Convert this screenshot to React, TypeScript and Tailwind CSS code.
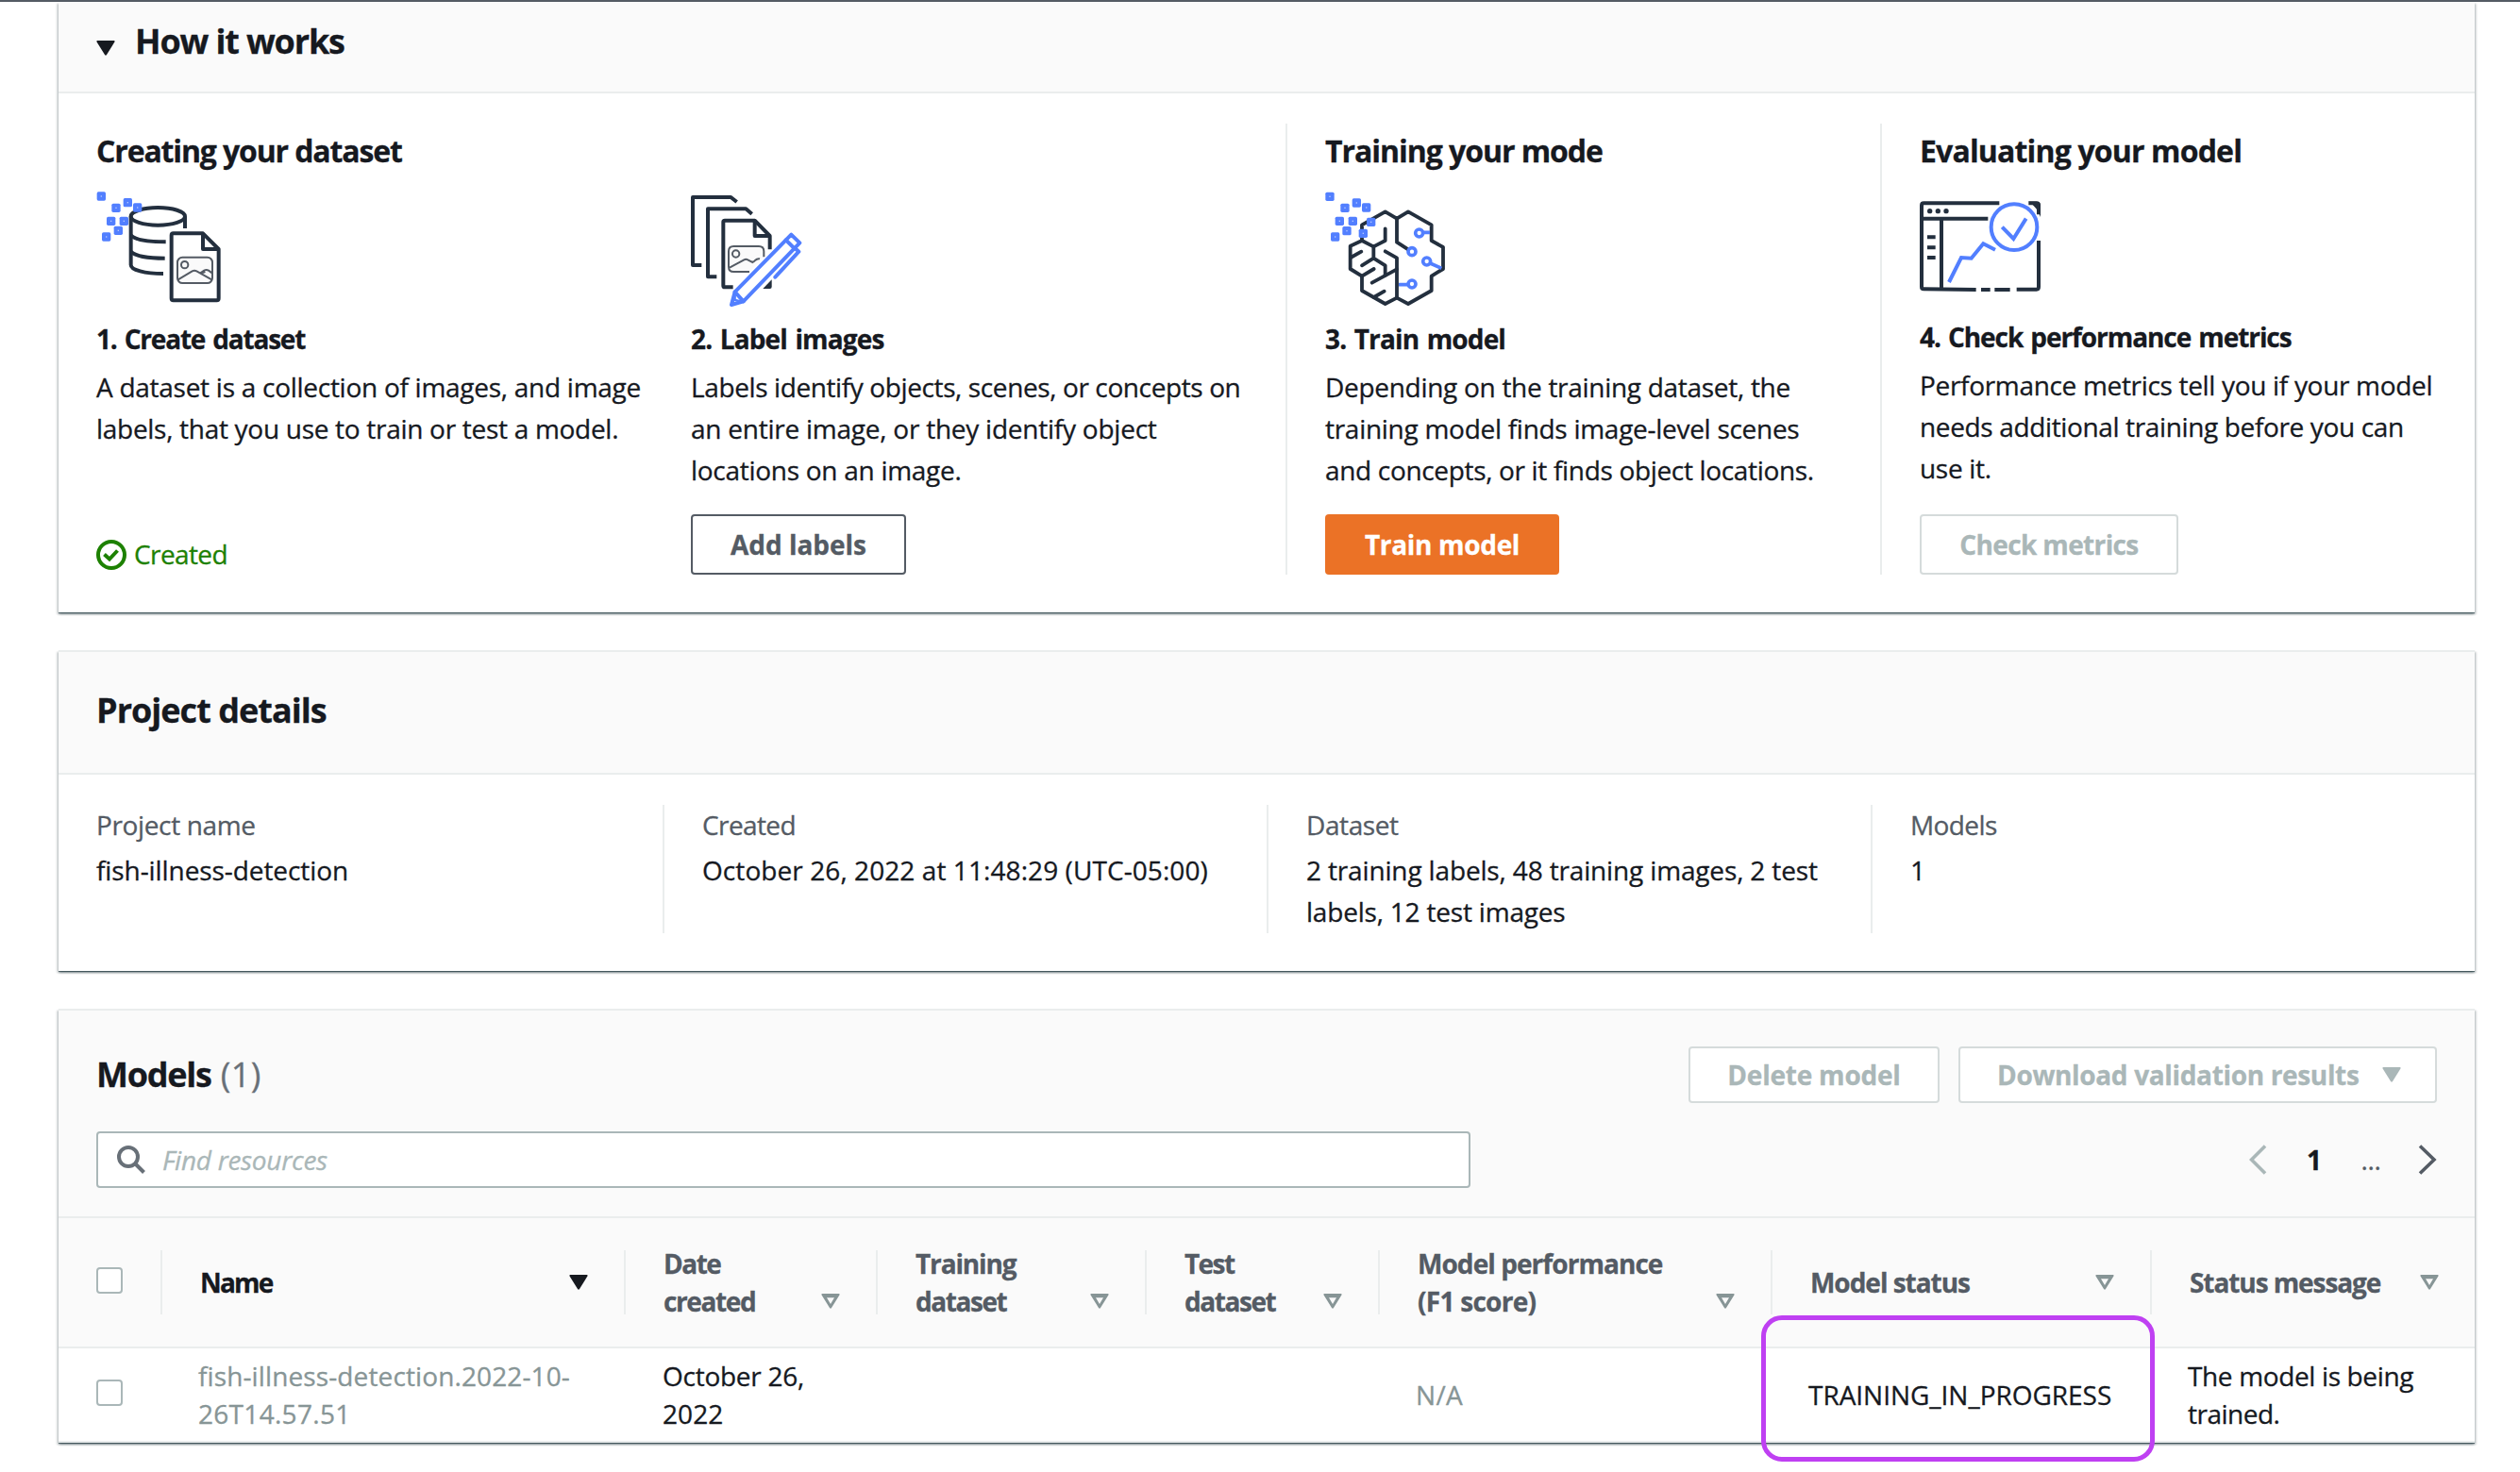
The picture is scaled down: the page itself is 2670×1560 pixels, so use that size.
import type { ReactNode } from "react";

const NAVY = "#232f3e";
const BLUE = "#527fff";

/* Small blue squares scattered at the corner of an illustration */
function Pixels({ points }: { points: [number, number][] }) {
  return (
    <g fill={BLUE}>
      {points.map(([x, y]) => (
        <g key={`${x}-${y}`}>
          <rect x={x - 14} y={y - 14} width="28" height="28" rx="5" />
          <rect x={x - 2} y={y - 2} width="4" height="4" fill="#b4c7ff" />
        </g>
      ))}
    </g>
  );
}

function DatasetIcon() {
  return (
    <svg className="block h-[130px] w-[148px]" viewBox="36 30 444 390" fill="none">
      <g stroke={NAVY} strokeWidth="12">
        <ellipse cx="232" cy="118" rx="86" ry="28" />
        <path d="M146 118V272C146 288 190 300 249 300" />
        <path d="M318 118V156" />
        <path d="M146 178C160 192 200 199 257 199" />
        <path d="M146 230C160 243 200 251 254 251" />
        <path d="M375 172H281Q275 172 275 178V379Q275 385 281 385H419Q425 385 425 379V222Z" strokeLinejoin="round" />
        <path d="M375 172V222H425" strokeLinejoin="round" />
      </g>
      <g stroke="#545b64" strokeWidth="6">
        <rect x="294" y="248" width="111" height="82" rx="16" fill="#fafafa" />
        <circle cx="317" cy="272" r="11" />
        <path d="M296 319L341 292Q348 288 355 292L403 319M367 298L379 290Q386 286 393 290L404 298M369 297Q376 298 382 294" />
      </g>
      <Pixels points={[[52, 54], [136, 74], [99, 91], [167, 90], [83, 133], [124, 133], [106, 163], [68, 183]]} />
    </svg>
  );
}

function LabelIcon() {
  return (
    <svg className="block h-[130px] w-[128px]" viewBox="36 15 384 390" fill="none">
      <g stroke={NAVY} strokeWidth="12" strokeLinejoin="round">
        <path d="M70 258H42V42H163L182 57" />
        <path d="M118 295H90V79H211L230 95" />
        <path d="M170 328H144Q139 328 139 323V121Q139 116 144 116H239L287 165V208" />
        <path d="M239 116V165H287" />
      </g>
      <path d="M265 333L293 304V327Q293 333 287 333Z" fill={NAVY} />
      <g stroke="#545b64" strokeWidth="6">
        <path
          d="M222 279H172Q156 279 156 263V214Q156 198 172 198H252Q268 198 268 214V232"
          fill="#fafafa"
        />
        <circle cx="179" cy="222" r="11" />
        <path d="M159 266L205 241Q211 238 217 241L234 250M229 246Q234 251 240 243Q247 236 255 238" />
      </g>
      <g stroke={BLUE} strokeWidth="12" strokeLinejoin="round" strokeLinecap="round">
        <path d="M355 161L176 343L165 384L203 373L382 187Z" fill="white" />
        <path d="M338 178L366 206M176 343L203 373M366 203L379 215L304 296" />
        <path d="M176 343V369L196 373" strokeWidth="7" />
      </g>
    </svg>
  );
}

function BrainIcon() {
  return (
    <svg className="block h-[130px] w-[141px]" viewBox="27 15 423 390" fill="none">
      <g stroke={NAVY} strokeWidth="11.5" strokeLinejoin="round">
        <path d="M144 180V130L218 88L255 110L291 88L365 130V180L402 201V270L365 293V339L291 381L255 362L218 381L144 339V293L107 270V197L144 180" />
        <path d="M255 110V185L292 209" />
        <g strokeLinecap="round">
          <path d="M144 180L181 199L218 180V142" />
          <path d="M181 199V236L144 259M181 236L218 259V290" />
          <path d="M108 234L142 215" />
          <path d="M144 293L182 270" />
          <path d="M218 214L255 235V362" />
          <path d="M255 271L176 314" />
          <path d="M182 360L215 341" />
        </g>
      </g>
      <g stroke={BLUE} strokeWidth="11">
        <circle cx="326" cy="156" r="12" />
        <circle cx="303" cy="215" r="12" />
        <circle cx="350" cy="246" r="12" />
        <circle cx="303" cy="318" r="12" />
        <path d="M338 154H360M361 252L397 268M291 320H261" />
      </g>
      <Pixels
        points={[[42, 40], [127, 60], [90, 76], [158, 75], [73, 118], [115, 118], [173, 121], [96, 149], [148, 157], [59, 168]]}
      />
    </svg>
  );
}

function MetricsIcon() {
  return (
    <svg className="block h-[130px] w-[141px]" viewBox="27 0 423 390" fill="none">
      <g stroke={NAVY} strokeWidth="12">
        <path d="M206 321L40 319Q33 319 33 312V53Q33 46 40 46H280M373 46H398Q405 46 405 53V82M405 165V312Q405 320 398 320H335" />
        <path d="M33 95H244M96 95V320M51 154H77M51 187H77M51 219H77M222 321H251M265 321H314" />
      </g>
      <g fill={NAVY}>
        <circle cx="59" cy="71" r="8" />
        <circle cx="85" cy="71" r="8" />
        <circle cx="111" cy="71" r="8" />
      </g>
      <path d="M373 41H398Q411 41 411 53V90Q400 58 373 41Z" fill={NAVY} />
      <g stroke={BLUE} strokeWidth="12">
        <circle cx="327" cy="122" r="73" />
        <path d="M289 122L325 159L365 95" />
        <path d="M120 297L159 219L191 221L229 175L267 194" />
      </g>
    </svg>
  );
}

function Caret({ open = false, className }: { open?: boolean; className: string }) {
  return (
    <svg className={`block h-4 w-5 shrink-0 ${className}`} viewBox="0 0 20 16">
      {open ? (
        <path
          d="M1.2 0H18.8Q20 0 19.4 1.6L11 15Q10 16.4 9 15L0.6 1.6Q0 0 1.2 0ZM6 4.2L10 11L14 4.2Z"
          fill="currentColor"
          fillRule="evenodd"
        />
      ) : (
        <path d="M1.2 0H18.8Q20 0 19.4 1.6L11 15Q10 16.4 9 15L0.6 1.6Q0 0 1.2 0Z" fill="currentColor" />
      )}
    </svg>
  );
}

function Panel({ className = "", children }: { className?: string; children: ReactNode }) {
  return (
    <section
      className={`mx-[62px] w-[2560px] bg-white shadow-[0_2px_2px_0_rgba(0,28,36,0.35),2px_2px_2px_0_rgba(0,28,36,0.14),-2px_2px_2px_0_rgba(0,28,36,0.14),0_1px_0_0_#879596] ${className}`}
    >
      {children}
    </section>
  );
}

function Step({ icon, title, lines, offset = "mt-[7px]", children }: {
  icon: ReactNode;
  title: ReactNode;
  lines: ReactNode[];
  offset?: string;
  children: ReactNode;
}) {
  return (
    <>
      <div className="mt-5">{icon}</div>
      <div className={offset}>
        <h4 className="font-bold leading-[44px] [word-spacing:2px]">{title}</h4>
        <div className="mt-[7px] leading-[44px]">
          {lines.map((l, i) => (
            <div key={i}>{l}</div>
          ))}
        </div>
      </div>
      <div className="mt-auto flex">{children}</div>
    </>
  );
}

function HowItWorks() {
  return (
    <Panel className="h-[647px]">
      <header className="flex h-[97px] border-b-2 border-[#eaeded] bg-[#fafafa] pl-10 pt-[19px]">
        <Caret className="mt-[22px]" />
        <h2 className="ml-[21px] mt-px text-[36px] font-bold leading-[44px] tracking-[-1.15px]">How it works</h2>
      </header>
      <div className="flex h-[510px] pt-8 leading-10">
        <div className="flex w-[670px] flex-col pl-10">
          <h3 className="mt-[9px] h-10 text-[32px] font-bold tracking-[-1.14px]">Creating your dataset</h3>
          <Step
            icon={<DatasetIcon />}
            title={<span className="tracking-[-1.2px]">1. Create dataset</span>}
            lines={[
              <span className="tracking-[-0.27px]">A dataset is a collection of images, and image</span>,
              <span className="tracking-[-0.29px]">labels, that you use to train or test a model.</span>,
            ]}
          >
            <span className="mb-0.5 flex items-center gap-2 text-[#1d8102]">
              <svg className="h-8 w-8" viewBox="0 0 32 32" fill="none" stroke="currentColor">
                <circle cx="16" cy="16" r="14" strokeWidth="4" />
                <path d="M8.5 15.5L14 20.5L22.5 11.5" strokeWidth="4" />
              </svg>
              <span className="-mt-px tracking-[-0.6px]">Created</span>
            </span>
          </Step>
        </div>
        <div className="flex w-[632px] flex-col border-r-2 border-[#eaeded] pt-[49px]">
          <Step
            icon={<LabelIcon />}
            title={<span className="tracking-[-0.85px]">2. Label images</span>}
            lines={[
              <span className="tracking-[-0.39px]">Labels identify objects, scenes, or concepts on</span>,
              <span className="tracking-[-0.24px]">an entire image, or they identify object</span>,
              <span className="tracking-[-0.28px]">locations on an image.</span>,
            ]}
          >
            <button className="h-16 w-[228px] rounded-[4px] border-2 border-[#545b64] font-bold tracking-[-0.03px] text-[#545b64]">
              Add labels
            </button>
          </Step>
        </div>
        <div className="flex w-[630px] flex-col border-r-2 border-[#eaeded] pl-10">
          <h3 className="mt-[9px] h-10 text-[32px] font-bold tracking-[-1.04px]">Training your mode</h3>
          <Step
            icon={<BrainIcon />}
            title={<span className="tracking-[-0.85px]">3. Train model</span>}
            lines={[
              <span className="tracking-[-0.29px]">Depending on the training dataset, the</span>,
              <span className="tracking-[-0.28px]">training model finds image-level scenes</span>,
              <span className="tracking-[-0.33px]">and concepts, or it finds object locations.</span>,
            ]}
          >
            <button className="h-16 w-[248px] rounded-[4px] bg-[#eb7226] font-bold tracking-[-0.32px] text-white">
              Train model
            </button>
          </Step>
        </div>
        <div className="flex flex-1 flex-col pl-10">
          <h3 className="mt-[9px] h-10 text-[32px] font-bold tracking-[-0.84px]">Evaluating your model</h3>
          <Step
            offset="mt-[5px]"
            icon={<MetricsIcon />}
            title={<span className="tracking-[-1.08px]">4. Check performance metrics</span>}
            lines={[
              <span className="tracking-[-0.32px]">Performance metrics tell you if your model</span>,
              <span className="tracking-[-0.36px]">needs additional training before you can</span>,
              <span className="tracking-[-0.3px]">use it.</span>,
            ]}
          >
            <button className="h-16 w-[274px] rounded-[4px] border-2 border-[#d5dbdb] font-bold tracking-[-0.64px] text-[#aab7b8]">
              Check metrics
            </button>
          </Step>
        </div>
      </div>
    </Panel>
  );
}

function ProjectDetails() {
  return (
    <Panel className="mt-10 h-[340px] border-t-2 border-[#eaeded]">
      <header className="h-[130px] border-b-2 border-[#eaeded] bg-[#fafafa] pl-10 pt-10">
        <h2 className="text-[36px] font-bold leading-[44px] tracking-[-0.98px]">Project details</h2>
      </header>
      <div className="mt-8 flex h-[136px] leading-[44px]">
        <div className="w-[642px] border-r-2 border-[#eaeded] pl-10">
          <div className="-mt-px tracking-[-0.36px] text-[#545b64]">Project name</div>
          <div className="mt-1 tracking-[-0.08px]">fish-illness-detection</div>
        </div>
        <div className="w-[640px] border-r-2 border-[#eaeded] pl-10">
          <div className="-mt-px tracking-[-0.6px] text-[#545b64]">Created</div>
          <div className="mt-1 tracking-[0.08px]">October 26, 2022 at 11:48:29 (UTC-05:00)</div>
        </div>
        <div className="w-[640px] border-r-2 border-[#eaeded] pl-10">
          <div className="-mt-px tracking-[-0.4px] text-[#545b64]">Dataset</div>
          <div className="mt-1 tracking-[-0.15px]">2 training labels, 48 training images, 2 test</div>
          <div className="tracking-[-0.2px]">labels, 12 test images</div>
        </div>
        <div className="pl-10">
          <div className="-mt-px tracking-[-0.6px] text-[#545b64]">Models</div>
          <div className="mt-1">1</div>
        </div>
      </div>
    </Panel>
  );
}

function Th({ className, last = false, sorted = false, single = false, children }: {
  className: string;
  last?: boolean;
  sorted?: boolean;
  single?: boolean;
  children: ReactNode;
}) {
  return (
    <div
      className={`flex h-[68px] justify-between pl-10 pr-[38px] font-bold leading-10 ${
        last ? "" : "border-r-2 border-[#eaeded]"
      } ${sorted ? "text-[#16191f]" : "text-[#545b64]"} ${className}`}
    >
      <div className={single ? "pt-[14px]" : "-mt-1.5"}>{children}</div>
      <Caret open={!sorted} className={`${single ? "mt-[26px]" : "mt-[46px]"} ${sorted ? "" : "text-[#879596]"}`} />
    </div>
  );
}

function Checkbox() {
  return <span className="block h-7 w-7 rounded-[4px] border-2 border-[#aab7b8] bg-white" />;
}

function Models() {
  return (
    <Panel className="mt-10 h-[460px] border-t-2 border-[#eaeded]">
      <div className="h-[220px] border-b-2 border-[#eaeded] bg-[#fafafa] px-10 pt-[38px]">
        <div className="flex h-[60px]">
          <h2 className="mr-auto pt-2 text-[36px] font-bold leading-[44px] tracking-[-1.25px]">
            Models <span className="ml-0.5 font-normal tracking-[0.4px] text-[#687078]">(1)</span>
          </h2>
          <button className="w-[266px] rounded-[4px] border-2 border-[#d5dbdb] bg-white font-bold tracking-[-0.22px] text-[#aab7b8]">
            Delete model
          </button>
          <button className="ml-5 flex w-[507px] items-center rounded-[4px] border-2 border-[#d5dbdb] bg-white pl-[39px] font-bold tracking-[-0.34px] text-[#aab7b8]">
            Download validation results
            <Caret className="ml-6" />
          </button>
        </div>
        <div className="mt-[30px] flex h-[60px] items-center">
          <div className="flex h-[60px] w-[1456px] items-center rounded-[4px] border-2 border-[#aab7b8] bg-white pl-5">
            <svg className="h-[30px] w-[30px]" viewBox="0 0 30 30" fill="none" stroke="#687078" strokeWidth="4">
              <circle cx="12" cy="12" r="10" />
              <path d="M19 19L28.5 28.5" />
            </svg>
            <span className="ml-[18px] italic tracking-[-0.28px] text-[#aab7b8]">Find resources</span>
          </div>
          <svg className="ml-auto h-8 w-5" viewBox="0 0 20 32" fill="none" stroke="#aab7b8" strokeWidth="3.6">
            <path d="M17 1.5L2.5 16L17 30.5" />
          </svg>
          <span className="ml-[41px] w-4 text-center font-bold">1</span>
          <span className="ml-[41px] w-[22px] text-center tracking-[-0.4px] text-[#545b64]">...</span>
          <svg className="ml-[39px] h-8 w-5" viewBox="0 0 20 32" fill="none" stroke="#545b64" strokeWidth="3.6">
            <path d="M2 1.5L17 16L2 30.5" />
          </svg>
        </div>
      </div>
      <div className="flex h-[138px] border-b-2 border-[#eaeded] bg-[#fafafa] pt-[34px]">
        <div className="h-[68px] w-[110px] border-r-2 border-[#eaeded] pl-10 pt-[18px]">
          <Checkbox />
        </div>
        <Th className="w-[491px]" sorted single>
          <span className="tracking-[-1.8px]">Name</span>
        </Th>
        <Th className="w-[267px]">
          <div className="tracking-[-1.5px]">Date</div>
          <div className="tracking-[-1.38px]">created</div>
        </Th>
        <Th className="w-[285px]">
          <div className="tracking-[-1.15px]">Training</div>
          <div className="tracking-[-1.44px]">dataset</div>
        </Th>
        <Th className="w-[247px]">
          <div className="tracking-[-1.6px]">Test</div>
          <div className="tracking-[-1.44px]">dataset</div>
        </Th>
        <Th className="w-[416px]">
          <div className="tracking-[-0.94px]">Model performance</div>
          <div className="tracking-[-0.73px]">(F1 score)</div>
        </Th>
        <Th className="w-[402px]" single>
          <span className="tracking-[-1.03px]">Model status</span>
        </Th>
        <Th className="flex-1" last single>
          <span className="tracking-[-1.08px]">Status message</span>
        </Th>
      </div>
      <div className="flex h-[100px] items-center border-b-2 border-[#eaeded] leading-10">
        <div className="w-[148px] pb-1 pl-10">
          <Checkbox />
        </div>
        <div className="w-[492px] text-[#879596]">
          <div className="tracking-[0.12px]">fish-illness-detection.2022-10-</div>
          <div className="tracking-[0.3px]">26T14.57.51</div>
        </div>
        <div className="w-[798px]">
          <div className="tracking-[-0.26px]">October 26,</div>
          <div className="tracking-[0.1px]">2022</div>
        </div>
        <div className="w-[416px] tracking-[0.33px] text-[#879596]">N/A</div>
        <div className="relative w-[402px]">
          <span className="tracking-[-0.03px]">TRAINING_IN_PROGRESS</span>
          <span className="absolute -left-[50px] -top-[64px] h-[155px] w-[417px] rounded-[22px] border-[5px] border-[#bf40f2]" />
        </div>
        <div>
          <div className="tracking-[-0.36px]">The model is being</div>
          <div className="tracking-[-0.5px]">trained.</div>
        </div>
      </div>
    </Panel>
  );
}

export default function App() {
  return (
    <main className="h-[1560px] w-[2670px] overflow-hidden border-t-2 border-[#545b64] bg-white font-['Open_Sans',sans-serif] text-[28px] text-[#16191f] [-webkit-text-stroke:0.3px]">
      <HowItWorks />
      <ProjectDetails />
      <Models />
    </main>
  );
}
